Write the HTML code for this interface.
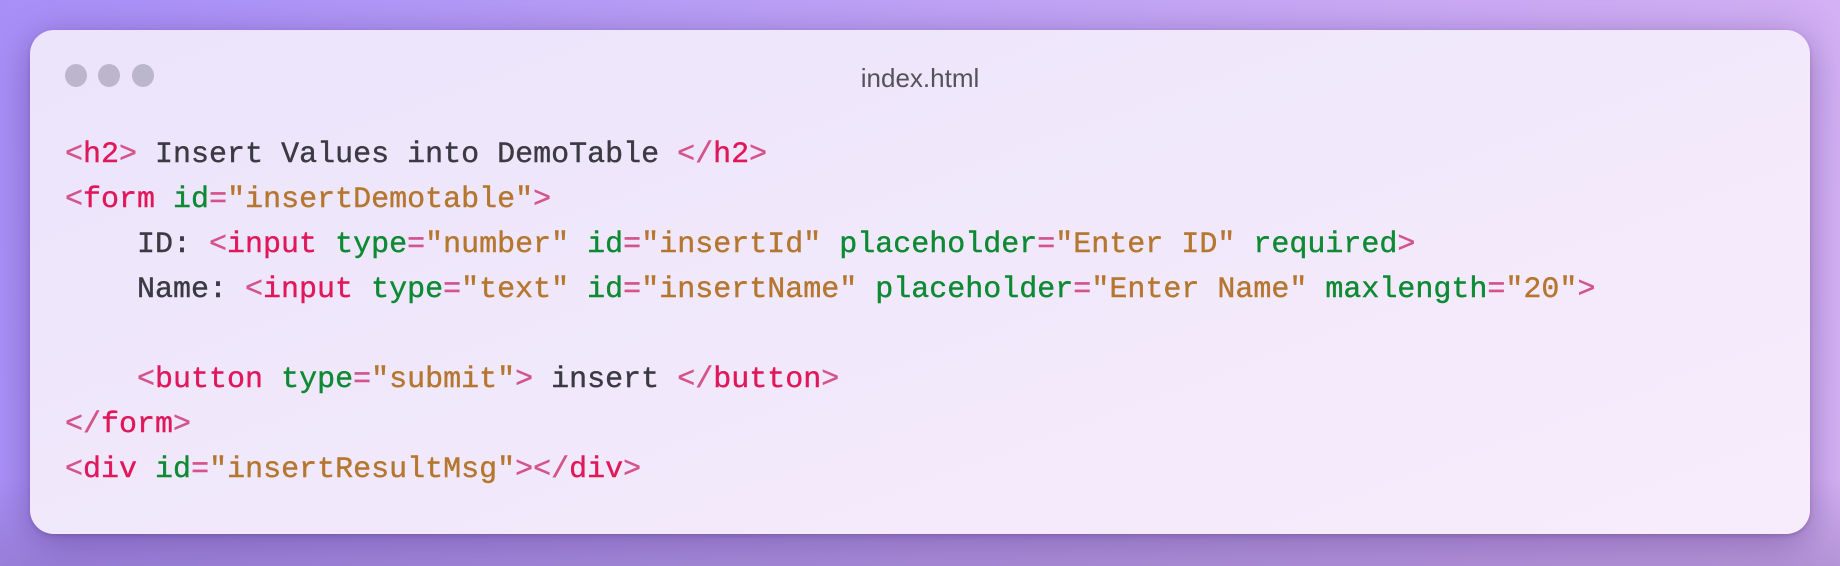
<!DOCTYPE html>
<html><head><meta charset="utf-8"><style>
html,body{margin:0;padding:0;}
body{width:1840px;height:566px;overflow:hidden;position:relative;
background:linear-gradient(100deg,#a88ff8 0%,#bba0f6 40%,#d6b2f4 100%);}
.shade{position:absolute;left:0;top:420px;width:1840px;height:146px;
background:linear-gradient(180deg,rgba(110,80,150,0) 0%,rgba(110,85,150,0.0) 40%,rgba(120,90,160,0.35) 100%);}
.card{position:absolute;left:30px;top:30px;width:1780px;height:504px;border-radius:24px;
background:linear-gradient(160deg,#ebe4fb 0%,#f1e8fb 50%,#f7ecfb 100%);
box-shadow:0 8px 40px rgba(70,40,120,0.45),0 2px 4px rgba(80,50,120,0.25);}
.dot{position:absolute;top:64px;width:22px;height:23px;border-radius:50%;background:#bcb6cd;}
.title{position:absolute;left:0;width:1840px;top:63px;text-align:center;font:26px "Liberation Sans",sans-serif;color:#55525a;}
pre{position:absolute;left:65px;top:133px;margin:0;font:30px/45px "Liberation Mono",monospace;color:#3b3a42;-webkit-text-stroke:0.4px currentColor;}
.b{color:#d4548a}.t{color:#e0185a}.a{color:#0d8a33}.s{color:#b5762f}
</style></head><body>
<div class="shade"></div>
<div class="card"></div>
<div class="dot" style="left:65px"></div>
<div class="dot" style="left:98px"></div>
<div class="dot" style="left:132px"></div>
<div class="title">index.html</div>
<pre><span class="b">&lt;</span><span class="t">h2</span><span class="b">&gt;</span> Insert Values into DemoTable <span class="b">&lt;/</span><span class="t">h2</span><span class="b">&gt;</span>
<span class="b">&lt;</span><span class="t">form</span> <span class="a">id</span><span class="b">=</span><span class="s">"insertDemotable"</span><span class="b">&gt;</span>
    ID: <span class="b">&lt;</span><span class="t">input</span> <span class="a">type</span><span class="b">=</span><span class="s">"number"</span> <span class="a">id</span><span class="b">=</span><span class="s">"insertId"</span> <span class="a">placeholder</span><span class="b">=</span><span class="s">"Enter ID"</span> <span class="a">required</span><span class="b">&gt;</span>
    Name: <span class="b">&lt;</span><span class="t">input</span> <span class="a">type</span><span class="b">=</span><span class="s">"text"</span> <span class="a">id</span><span class="b">=</span><span class="s">"insertName"</span> <span class="a">placeholder</span><span class="b">=</span><span class="s">"Enter Name"</span> <span class="a">maxlength</span><span class="b">=</span><span class="s">"20"</span><span class="b">&gt;</span>

    <span class="b">&lt;</span><span class="t">button</span> <span class="a">type</span><span class="b">=</span><span class="s">"submit"</span><span class="b">&gt;</span> insert <span class="b">&lt;/</span><span class="t">button</span><span class="b">&gt;</span>
<span class="b">&lt;/</span><span class="t">form</span><span class="b">&gt;</span>
<span class="b">&lt;</span><span class="t">div</span> <span class="a">id</span><span class="b">=</span><span class="s">"insertResultMsg"</span><span class="b">&gt;&lt;/</span><span class="t">div</span><span class="b">&gt;</span></pre>
</body></html>
